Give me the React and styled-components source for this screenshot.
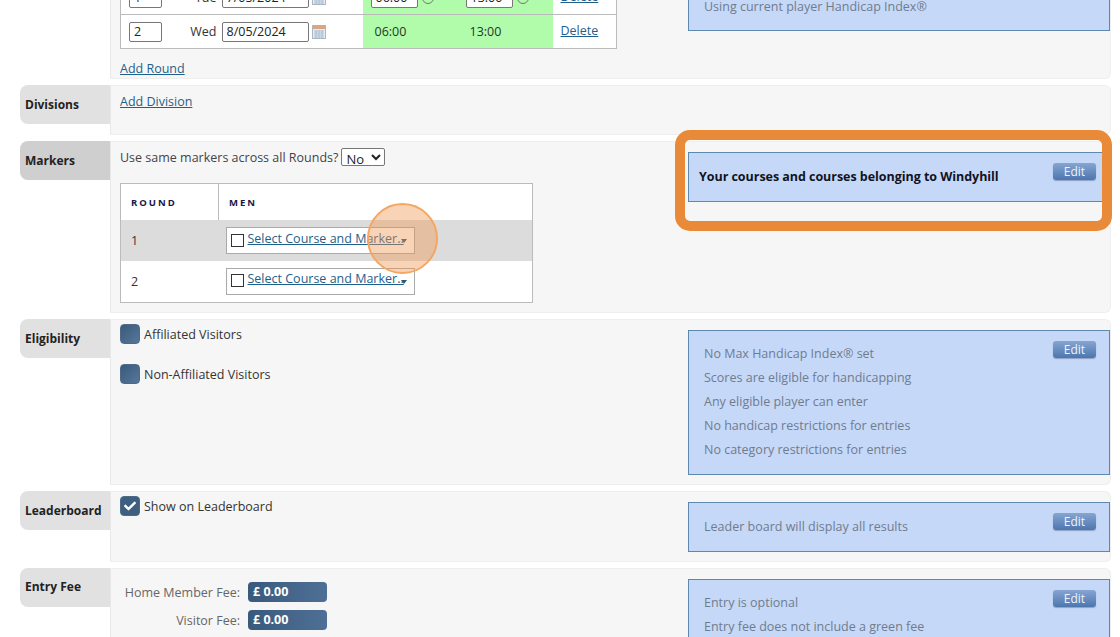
import React from 'react';
import styled, { createGlobalStyle } from 'styled-components';
import { FaCheck } from 'react-icons/fa';

const GlobalStyle = createGlobalStyle`
  html, body {
    margin: 0;
    padding: 0;
    height: 637px;
    overflow: hidden;
    background: #fff;
    font-family: "Open Sans", "Liberation Sans", sans-serif;
    font-size: 12.5px;
    color: #444;
  }
`;

const Page = styled.div`
  position: relative;
  width: 1120px;
  height: 637px;
  overflow: hidden;
`;

// 첫 구간은 위로 잘려 있어서 음수 마진으로 올린다
const Sections = styled.div`
  margin-top: -60px;
  padding-left: 20px;
  width: 1091px;
  display: flex;
  flex-direction: column;
  gap: 6px;
`;

const Section = styled.section`
  display: grid;
  grid-template-columns: 90px 1fr;
  height: ${(p) => p.$height}px;
`;

const SideLabel = styled.div`
  height: 39px;
  box-sizing: border-box;
  padding: ${(p) => p.$top || 11}px 0 0 5px;
  font-weight: 700;
  font-size: 12px;
  color: #222;
  background: ${(p) => (p.$active ? '#cfcfcf' : '#e1e1e1')};
  border-radius: 8px 0 0 8px;
`;

const Panel = styled.div`
  display: flex;
  justify-content: space-between;
  box-sizing: border-box;
  background: #f6f6f6;
  border: 1px solid #eeeeee;
  border-left-color: #e8e8e8;
  border-radius: 0 6px 6px 0;
  padding-left: 9px;
  min-width: 0;
`;

const Left = styled.div`
  padding-top: ${(p) => p.$top || 0}px;
  flex: 1;
`;

const InfoBox = styled.div`
  position: relative;
  box-sizing: border-box;
  flex: none;
  width: 422px;
  height: ${(p) => p.$height}px;
  margin-top: ${(p) => p.$top || 10}px;
  padding: ${(p) => p.$pad || 11}px 15px 0;
  background: #c6d8f8;
  border: 1px solid #5f88ae;
  color: #6f7c8e;
  line-height: 24px;
`;

const InfoStrong = styled.div`
  font-weight: 700;
  color: #10141f;
  margin-left: -5px;
  letter-spacing: -0.04px;
`;

const EditButton = styled.button`
  position: absolute;
  top: 10px;
  right: 13px;
  width: 43px;
  height: 17px;
  padding: 0;
  border: 0;
  border-radius: 3px;
  background: linear-gradient(#86a5d2, #4d76ae);
  box-shadow: 0 1px 1px rgba(60, 80, 120, 0.4);
  color: #eef3fb;
  font-family: inherit;
  font-size: 12px;
  line-height: 16px;
`;

const RoundTable = styled.table`
  width: 497px;
  table-layout: fixed;
  border-collapse: collapse;
  border: 1px solid #bbb;
  background: #fff;
  font-size: 12.5px;
  td {
    box-sizing: border-box;
    height: 34px;
    padding: 0;
    border-top: 1px solid #bbb;
  }
  tr:first-child td {
    border-top: 0;
  }
`;

const NumCell = styled.td`
  width: 60px;
  padding-left: 8px !important;
`;

const DateCell = styled.td`
  width: 182px;
  white-space: nowrap;
`;

const DayName = styled.span`
  display: inline-block;
  width: 36px;
  text-align: right;
  margin-right: 5px;
  color: #333;
  vertical-align: middle;
`;

const TextBox = styled.input`
  box-sizing: border-box;
  width: ${(p) => p.$width}px;
  height: 20px;
  padding: 0 4px;
  border: 1px solid #777;
  border-radius: 2px;
  font-family: inherit;
  font-size: 12.5px;
  color: #222;
  vertical-align: middle;
`;

const CalendarIcon = styled.svg`
  width: 14px;
  height: 14px;
  margin-left: 3px;
  vertical-align: middle;
`;

const TimeCell = styled.td`
  width: 95px;
  padding-left: 8px !important;
  background: #b1fcab;
  color: #263626;
  white-space: nowrap;
`;

const PlainTime = styled.span`
  padding-left: 4px;
`;

const ClockDot = styled.span`
  display: inline-block;
  width: 12px;
  height: 12px;
  margin-left: 4px;
  box-sizing: border-box;
  border: 1px solid #777;
  border-radius: 50%;
  vertical-align: middle;
`;

const ActionCell = styled.td`
  padding-left: 8px !important;
  padding-bottom: 2px !important;
`;

const TextLink = styled.a`
  color: #1f5f8b;
  text-decoration: underline;
  cursor: pointer;
`;

const AddLink = styled(TextLink)`
  display: block;
  margin-top: ${(p) => p.$top}px;
`;

const SameRow = styled.div`
  display: flex;
  align-items: center;
  gap: 3px;
  height: 20px;
`;

const YesNo = styled.select`
  width: 44px;
  height: 18px;
  border: 1px solid #777;
  border-radius: 2px;
  background: #fff;
  font-family: inherit;
  font-size: 13px;
  color: #222;
  padding: 0;
`;

const MarkerTable = styled.table`
  width: 413px;
  margin-top: 16px;
  border-collapse: collapse;
  border: 1px solid #bbb;
  background: #fff;
`;

const HeadCell = styled.th`
  height: 36px;
  padding: 0 0 0 10px;
  width: ${(p) => (p.$narrow ? '87px' : 'auto')};
  text-align: left;
  font-size: 9.5px;
  font-weight: 700;
  letter-spacing: 2px;
  color: #17184a;
  border-right: 1px solid #bbb;
`;

const MarkerRow = styled.tr`
  background: ${(p) => (p.$shaded ? '#dcdcdc' : '#fff')};
`;

const MarkerNum = styled.td`
  height: 41px;
  box-sizing: border-box;
  padding: 0 0 0 10px;
  color: #333;
`;

const MarkerCell = styled.td`
  padding: 0 0 0 7px;
`;

const Picker = styled.div`
  position: relative;
  display: flex;
  align-items: center;
  box-sizing: border-box;
  width: 189px;
  height: 27px;
  padding: 0 0 5px 4px;
  background: #fff;
  border: 1px solid #aaa;
`;

const PickerBox = styled.span`
  flex: none;
  box-sizing: border-box;
  width: 13px;
  height: 13px;
  margin: 4px 4px 0 0;
  border: 1px solid #333;
`;

const PickerArrow = styled.span`
  position: absolute;
  top: 11px;
  right: 7px;
  width: 0;
  height: 0;
  border-left: 3px solid transparent;
  border-right: 3px solid transparent;
  border-top: 4px solid #33566f;
`;

const CheckRow = styled.div`
  display: flex;
  align-items: center;
  gap: 4px;
  height: 20px;
  margin-bottom: ${(p) => p.$gap || 0}px;
  color: #333;
`;

const CheckText = styled.span`
  margin-top: 1px;
`;

const FancyCheck = styled.span`
  display: flex;
  align-items: center;
  justify-content: center;
  flex: none;
  width: 20px;
  height: 20px;
  border-radius: 4px;
  background: ${(p) => (p.$checked ? '#3f5f80' : 'linear-gradient(135deg, #3a5a7a, #57779b)')};
  border: 1px solid #4d6a88;
  box-sizing: border-box;
  color: #fff;
  font-size: 12px;
`;

const FeeRow = styled.div`
  display: flex;
  align-items: center;
  gap: 8px;
  height: 20px;
  margin-bottom: 8px;
`;

const FeeLabel = styled.label`
  width: 120px;
  text-align: right;
  color: #666;
`;

const FeeInput = styled.div`
  box-sizing: border-box;
  width: 79px;
  height: 20px;
  padding-left: 5px;
  border-radius: 4px;
  background: linear-gradient(90deg, #3a5a7c, #4f7096);
  color: #fff;
  font-weight: 700;
  line-height: 20px;
`;

// 튜토리얼 강조 표시
const HighlightBox = styled.div`
  position: absolute;
  left: 675px;
  top: 130px;
  width: 437px;
  height: 101px;
  box-sizing: border-box;
  border: 10px solid #e98a39;
  border-radius: 15px;
  pointer-events: none;
`;

const HighlightDot = styled.div`
  position: absolute;
  left: 367px;
  top: 203px;
  width: 71px;
  height: 71px;
  box-sizing: border-box;
  border: 2px solid #f5a662;
  border-radius: 50%;
  background: rgba(240, 150, 80, 0.42);
  pointer-events: none;
`;

const Calendar = () => (
  <CalendarIcon viewBox="0 0 14 14">
    <rect x="0.5" y="0.5" width="13" height="13" fill="#e6edf4" stroke="#a9b6c3" />
    <rect x="1" y="1" width="12" height="3" fill="#dba583" />
    <path d="M2 6h10M2 8h10M2 10h10M2 12h10M4 5v8M7 5v8M10 5v8" stroke="#a3b8cc" strokeWidth="0.8" />
  </CalendarIcon>
);

const rounds = [
  { num: 1, day: 'Tue', date: '7/05/2024', editable: true },
  { num: 2, day: 'Wed', date: '8/05/2024', editable: false },
];

const App = () => {
  return (
    <Page>
      <GlobalStyle />
      <Sections>
        {/* 라운드 */}
        <Section $height={139}>
          <div />
          <Panel>
            <Left $top={39}>
              <RoundTable>
                <tbody>
                  {rounds.map((r) => (
                    <tr key={r.num}>
                      <NumCell><TextBox $width={33} defaultValue={r.num} /></NumCell>
                      <DateCell>
                        <DayName>{r.day}</DayName>
                        <TextBox $width={87} defaultValue={r.date} />
                        <Calendar />
                      </DateCell>
                      <TimeCell>
                        {r.editable ? (
                          <>
                            <TextBox $width={47} defaultValue="06:00" />
                            <ClockDot />
                          </>
                        ) : <PlainTime>06:00</PlainTime>}
                      </TimeCell>
                      <TimeCell>
                        {r.editable ? (
                          <>
                            <TextBox $width={47} defaultValue="13:00" />
                            <ClockDot />
                          </>
                        ) : <PlainTime>13:00</PlainTime>}
                      </TimeCell>
                      <ActionCell><TextLink>Delete</TextLink></ActionCell>
                    </tr>
                  ))}
                </tbody>
              </RoundTable>
              <AddLink $top={11}>Add Round</AddLink>
            </Left>
            <InfoBox $height={80} $pad={43}>Using current player Handicap Index®</InfoBox>
          </Panel>
        </Section>

        {/* 디비전 */}
        <Section $height={50}>
          <SideLabel>Divisions</SideLabel>
          <Panel>
            <Left $top={7}><TextLink>Add Division</TextLink></Left>
          </Panel>
        </Section>

        {/* 마커 */}
        <Section $height={172}>
          <SideLabel $active>Markers</SideLabel>
          <Panel>
            <Left $top={5}>
              <SameRow>
                Use same markers across all Rounds?
                <YesNo defaultValue="No">
                  <option>No</option>
                  <option>Yes</option>
                </YesNo>
              </SameRow>
              <MarkerTable>
                <thead>
                  <tr>
                    <HeadCell $narrow>ROUND</HeadCell>
                    <HeadCell>MEN</HeadCell>
                  </tr>
                </thead>
                <tbody>
                  {[1, 2].map((n) => (
                    <MarkerRow key={n} $shaded={n === 1}>
                      <MarkerNum>{n}</MarkerNum>
                      <MarkerCell>
                        <Picker>
                          <PickerBox />
                          <TextLink>Select Course and Marker..</TextLink>
                          <PickerArrow />
                        </Picker>
                      </MarkerCell>
                    </MarkerRow>
                  ))}
                </tbody>
              </MarkerTable>
            </Left>
            <InfoBox $height={50} $pad={12}>
              <InfoStrong>Your courses and courses belonging to Windyhill</InfoStrong>
              <EditButton>Edit</EditButton>
            </InfoBox>
          </Panel>
        </Section>

        {/* 자격 */}
        <Section $height={166}>
          <SideLabel>Eligibility</SideLabel>
          <Panel>
            <Left $top={4}>
              <CheckRow $gap={20}><FancyCheck /><CheckText>Affiliated Visitors</CheckText></CheckRow>
              <CheckRow><FancyCheck /><CheckText>Non-Affiliated Visitors</CheckText></CheckRow>
            </Left>
            <InfoBox $height={145}>
              <div>No Max Handicap Index® set</div>
              <div>Scores are eligible for handicapping</div>
              <div>Any eligible player can enter</div>
              <div>No handicap restrictions for entries</div>
              <div>No category restrictions for entries</div>
              <EditButton>Edit</EditButton>
            </InfoBox>
          </Panel>
        </Section>

        {/* 리더보드 */}
        <Section $height={71}>
          <SideLabel>Leaderboard</SideLabel>
          <Panel>
            <Left $top={4}>
              <CheckRow><FancyCheck $checked><FaCheck /></FancyCheck><CheckText>Show on Leaderboard</CheckText></CheckRow>
            </Left>
            <InfoBox $height={50} $pad={12}>
              Leader board will display all results
              <EditButton>Edit</EditButton>
            </InfoBox>
          </Panel>
        </Section>

        {/* 참가비 */}
        <Section $height={90}>
          <SideLabel $top={10}>Entry Fee</SideLabel>
          <Panel>
            <Left $top={13}>
              <FeeRow><FeeLabel>Home Member Fee:</FeeLabel><FeeInput>£ 0.00</FeeInput></FeeRow>
              <FeeRow><FeeLabel>Visitor Fee:</FeeLabel><FeeInput>£ 0.00</FeeInput></FeeRow>
            </Left>
            <InfoBox $height={80}>
              <div>Entry is optional</div>
              <div>Entry fee does not include a green fee</div>
              <EditButton>Edit</EditButton>
            </InfoBox>
          </Panel>
        </Section>
      </Sections>
      <HighlightBox />
      <HighlightDot />
    </Page>
  );
};

export default App;
